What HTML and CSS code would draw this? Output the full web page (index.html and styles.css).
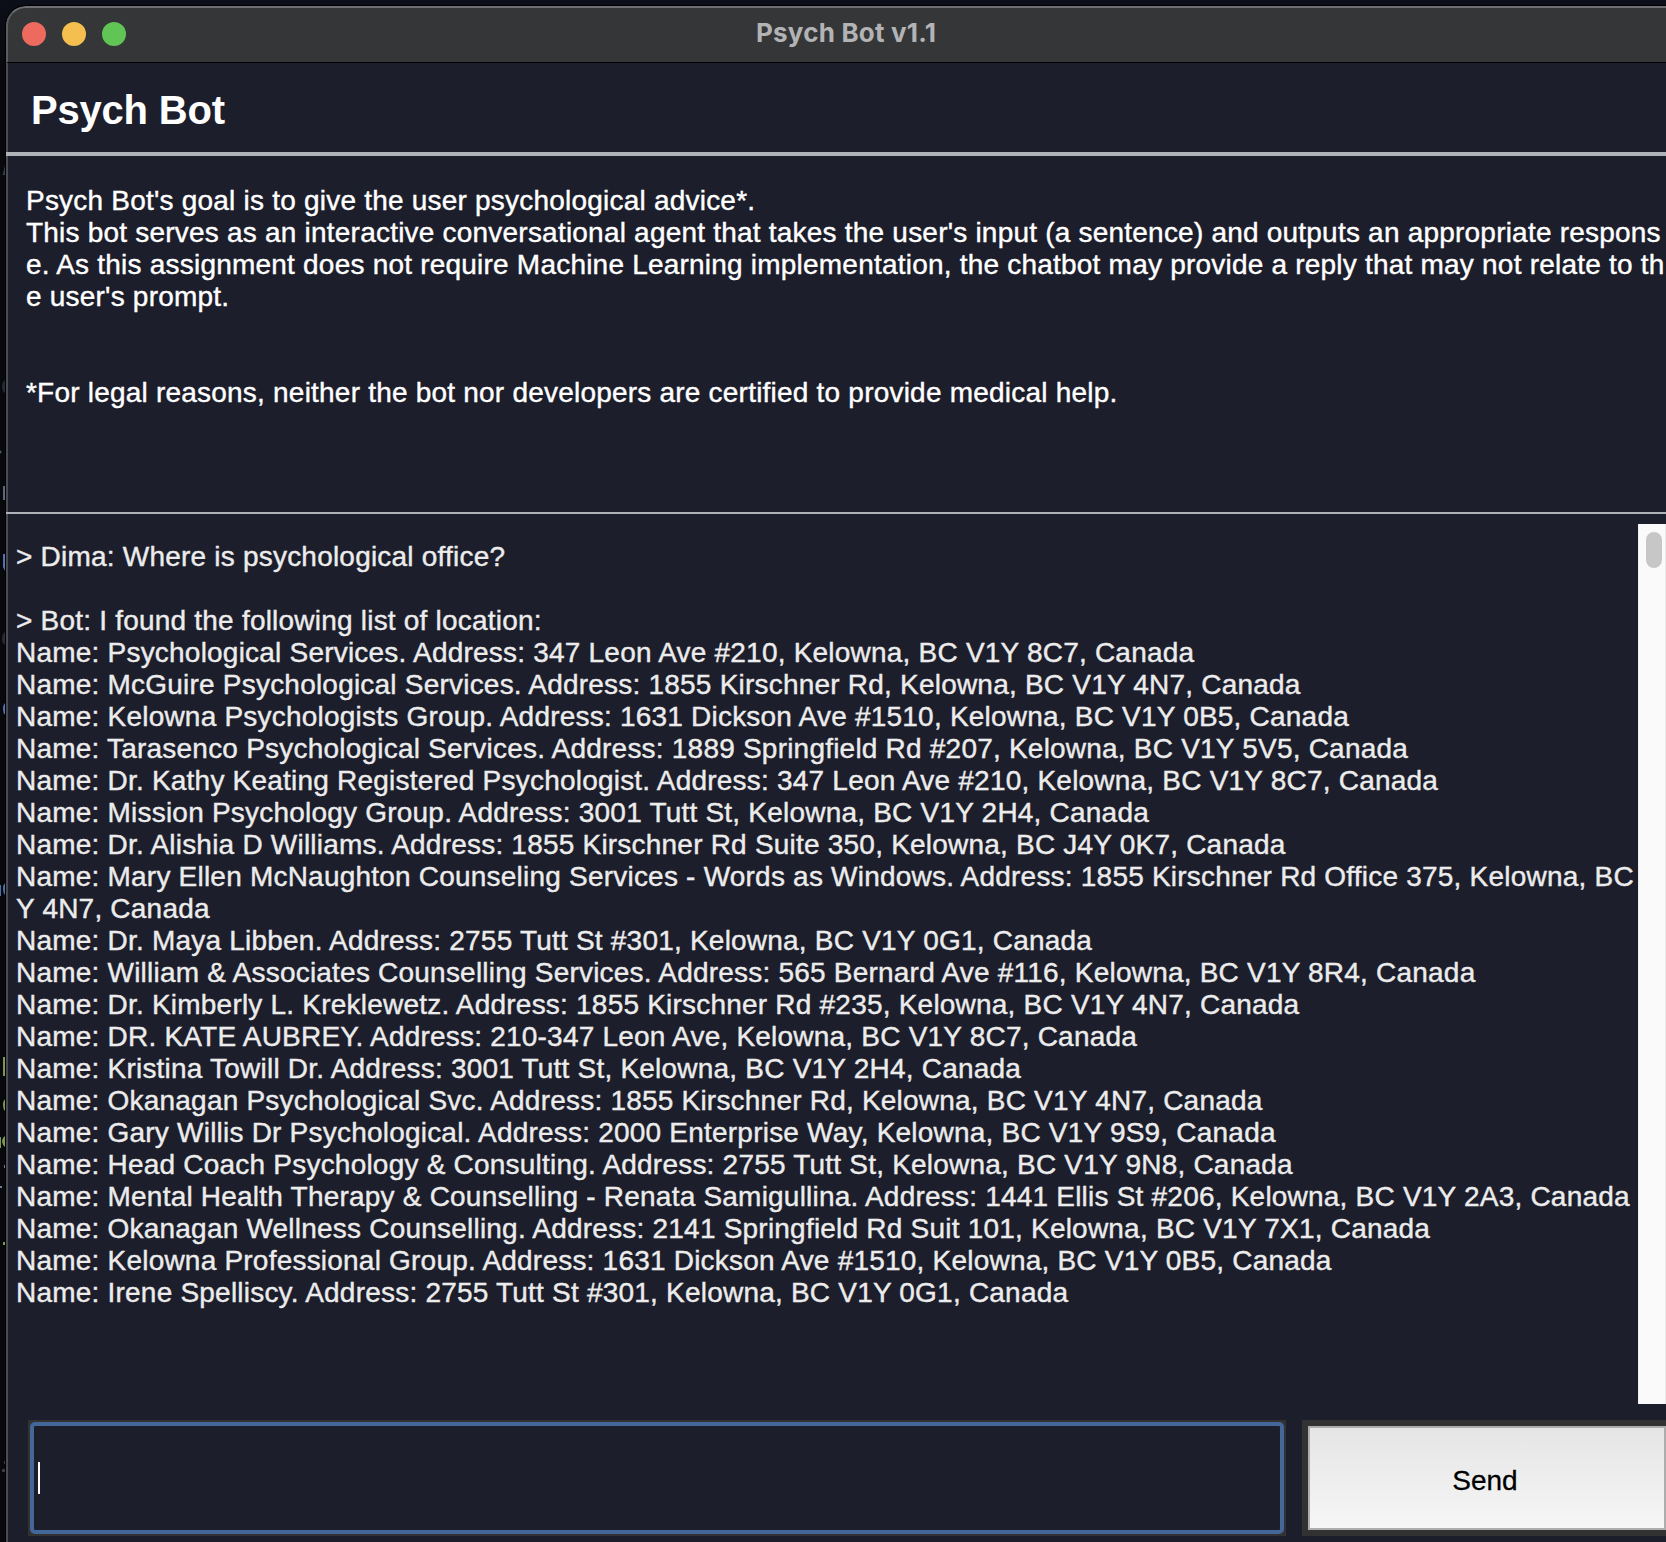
FILE: index.html
```html
<!DOCTYPE html>
<html lang="en">
<head>
<meta charset="utf-8">
<title>Psych Bot v1.1</title>
<link rel="stylesheet" href="styles.css">
</head>
<body>
<svg class="backdrop" width="5" height="1542" viewBox="0 0 5 1542" aria-hidden="true">
  <path d="M3 174L5 165V175H2Z" fill="#35404f"/>
  <path d="M5 380Q2 382 2 387Q2 391 5 393Z" fill="#262a36"/>
  <circle cx="0" cy="452" r="1.5" fill="#555a68"/>
  <path d="M3 486H5V500H3Z" fill="#62657c"/>
  <path d="M3 554H5V571L3 567Z" fill="#5572b4"/>
  <path d="M5 632Q2 634 2 639Q2 643 5 645Z" fill="#292a36"/>
  <path d="M5 703Q3 705 3 709Q3 713 5 715Z" fill="#5572b4"/>
  <path d="M0 885H1V896H0ZM5 883Q3 885 3 889Q3 893 5 895Z" fill="#4d72a8"/>
  <path d="M3 1057H5V1076H3ZM5 1099Q3 1101 3 1105Q3 1109 5 1111ZM0 1137H1V1148H0ZM5 1136Q2 1138 2 1142Q3 1146 5 1147ZM3 1242H5V1245H3Z" fill="#7d9855"/>
  <path d="M0 1186H2V1188H0ZM4 1165H5V1168H4Z" fill="#777798"/>
  <path d="M4 1461H5V1464H4ZM2 1469H5V1472H2Z" fill="#3a3c40"/>
</svg>
<main class="window">
  <header class="titlebar">
    <div class="lights"><i class="light close"></i><i class="light minimize"></i><i class="light maximize"></i></div>
    <div class="title">Psych Bot v1.1</div>
  </header>
  <section class="heading"><h1>Psych Bot</h1></section>
  <section class="intro">
    <p>Psych Bot's goal is to give the user psychological advice*.</p>
    <p>This bot serves as an interactive conversational agent that takes the user's input (a sentence) and outputs an appropriate respons</p>
    <p>e. As this assignment does not require Machine Learning implementation, the chatbot may provide a reply that may not relate to th</p>
    <p>e user's prompt.</p>
    <p></p>
    <p></p>
    <p>*For legal reasons, neither the bot nor developers are certified to provide medical help.</p>
  </section>
  <section class="chat">
    <div class="log">
      <p>&gt; Dima: Where is psychological office?</p>
      <p></p>
      <p>&gt; Bot: I found the following list of location:</p>
      <p>Name: Psychological Services. Address: 347 Leon Ave #210, Kelowna, BC V1Y 8C7, Canada</p>
      <p>Name: McGuire Psychological Services. Address: 1855 Kirschner Rd, Kelowna, BC V1Y 4N7, Canada</p>
      <p>Name: Kelowna Psychologists Group. Address: 1631 Dickson Ave #1510, Kelowna, BC V1Y 0B5, Canada</p>
      <p>Name: Tarasenco Psychological Services. Address: 1889 Springfield Rd #207, Kelowna, BC V1Y 5V5, Canada</p>
      <p>Name: Dr. Kathy Keating Registered Psychologist. Address: 347 Leon Ave #210, Kelowna, BC V1Y 8C7, Canada</p>
      <p>Name: Mission Psychology Group. Address: 3001 Tutt St, Kelowna, BC V1Y 2H4, Canada</p>
      <p>Name: Dr. Alishia D Williams. Address: 1855 Kirschner Rd Suite 350, Kelowna, BC J4Y 0K7, Canada</p>
      <p>Name: Mary Ellen McNaughton Counseling Services - Words as Windows. Address: 1855 Kirschner Rd Office 375, Kelowna, BC</p>
      <p>Y 4N7, Canada</p>
      <p>Name: Dr. Maya Libben. Address: 2755 Tutt St #301, Kelowna, BC V1Y 0G1, Canada</p>
      <p>Name: William &amp; Associates Counselling Services. Address: 565 Bernard Ave #116, Kelowna, BC V1Y 8R4, Canada</p>
      <p>Name: Dr. Kimberly L. Kreklewetz. Address: 1855 Kirschner Rd #235, Kelowna, BC V1Y 4N7, Canada</p>
      <p>Name: DR. KATE AUBREY. Address: 210-347 Leon Ave, Kelowna, BC V1Y 8C7, Canada</p>
      <p>Name: Kristina Towill Dr. Address: 3001 Tutt St, Kelowna, BC V1Y 2H4, Canada</p>
      <p>Name: Okanagan Psychological Svc. Address: 1855 Kirschner Rd, Kelowna, BC V1Y 4N7, Canada</p>
      <p>Name: Gary Willis Dr Psychological. Address: 2000 Enterprise Way, Kelowna, BC V1Y 9S9, Canada</p>
      <p>Name: Head Coach Psychology &amp; Consulting. Address: 2755 Tutt St, Kelowna, BC V1Y 9N8, Canada</p>
      <p>Name: Mental Health Therapy &amp; Counselling - Renata Samigullina. Address: 1441 Ellis St #206, Kelowna, BC V1Y 2A3, Canada</p>
      <p>Name: Okanagan Wellness Counselling. Address: 2141 Springfield Rd Suit 101, Kelowna, BC V1Y 7X1, Canada</p>
      <p>Name: Kelowna Professional Group. Address: 1631 Dickson Ave #1510, Kelowna, BC V1Y 0B5, Canada</p>
      <p>Name: Irene Spelliscy. Address: 2755 Tutt St #301, Kelowna, BC V1Y 0G1, Canada</p>
    </div>
    <div class="scrollbar"><div class="thumb"></div></div>
  </section>
  <form class="composer">
    <div class="field"><div class="entry"><span class="caret"></span></div></div>
    <div class="send-frame"><button class="send" type="button">Send</button></div>
  </form>
</main>
</body>
</html>
```

FILE: styles.css
```css
* { box-sizing: border-box; }
html, body { margin: 0; width: 1666px; height: 1542px; overflow: hidden; }
body {
  display: flex;
  padding-top: 5px;
  background: linear-gradient(#0c0e19, #08090d 80px);
  font: 28px/32px "Liberation Sans", Arial, sans-serif;
}
p, h1 { margin: 0; }
.backdrop { flex: none; width: 5px; height: 1542px; margin-top: -5px; overflow: hidden; }
.window {
  flex: 1;
  min-width: 0;
  height: 1560px;
  display: flex;
  flex-direction: column;
  border: 1px solid #000;
  border-right: 0;
  border-top-left-radius: 21px;
  background: linear-gradient(90deg, #4d4a52 2px, #1d1e2b 2px);
  overflow: hidden;
}
.titlebar {
  height: 57px;
  flex: none;
  display: flex;
  align-items: center;
  padding-bottom: 2px;
  border-top: 2px solid #6f6f73;
  border-left: 2px solid #5c5c5f;
  border-bottom: 1px solid #000;
  border-top-left-radius: 20px;
  background: #353638;
}
.lights { display: flex; gap: 16px; margin-left: 14px; }
.light { width: 24px; height: 24px; border-radius: 50%; }
.close { background: #ed6a5f; }
.minimize { background: #f5bf4f; }
.maximize { background: #61c555; }
.title {
  margin: -2px 0 0 630px;
  color: #b3b3b5;
  font: 700 26px/32px Inter, sans-serif;
  letter-spacing: .2px;
  white-space: nowrap;
}
.heading { height: 93px; flex: none; padding: 24px 0 0 25px; border-bottom: 4px solid #aeb2b9; }
h1 { color: #fff; font-size: 40px; line-height: 46px; letter-spacing: -.2px; white-space: nowrap; }
p { height: 32px; white-space: pre; }
.intro, .log { letter-spacing: .214px; -webkit-text-stroke: .4px currentColor; }
.intro { height: 358px; flex: none; padding: 29px 0 0 20px; border-bottom: 2px solid #aeb2b9; color: #fff; }
.chat { height: 890px; flex: none; display: flex; justify-content: space-between; padding-top: 10px; }
.log { width: 1628px; overflow: hidden; padding: 17px 0 0 10px; color: #ececec; }
.scrollbar { width: 28px; padding: 8px 0 0 7px; background: #fafafa; border-left: 1px solid #eee; border-right: 1px solid #e9e9e9; }
.thumb { width: 16px; height: 36px; border-radius: 8px; background: #c7c7c7; }
.composer { display: flex; gap: 16px; padding: 16px 0 0 22px; }
.field { width: 1258px; height: 116px; padding: 2px; background: #323232; }
.entry { height: 112px; padding: 36px 0 0 4px; border: 4px solid #446799; border-radius: 5px; background: #1d1e2b; }
.caret { display: block; width: 2px; height: 32px; background: #fff; }
.send-frame { flex: 1; height: 116px; padding: 6px 0 6px 6px; background: #323232; }
.send { display: block; width: 100%; height: 104px; padding: 6px 4px 0 0; border: 2px solid #adadad; background: linear-gradient(#e5e5e5, #f6f6f6); color: #000; font: inherit; -webkit-text-stroke: .3px currentColor; }
```
